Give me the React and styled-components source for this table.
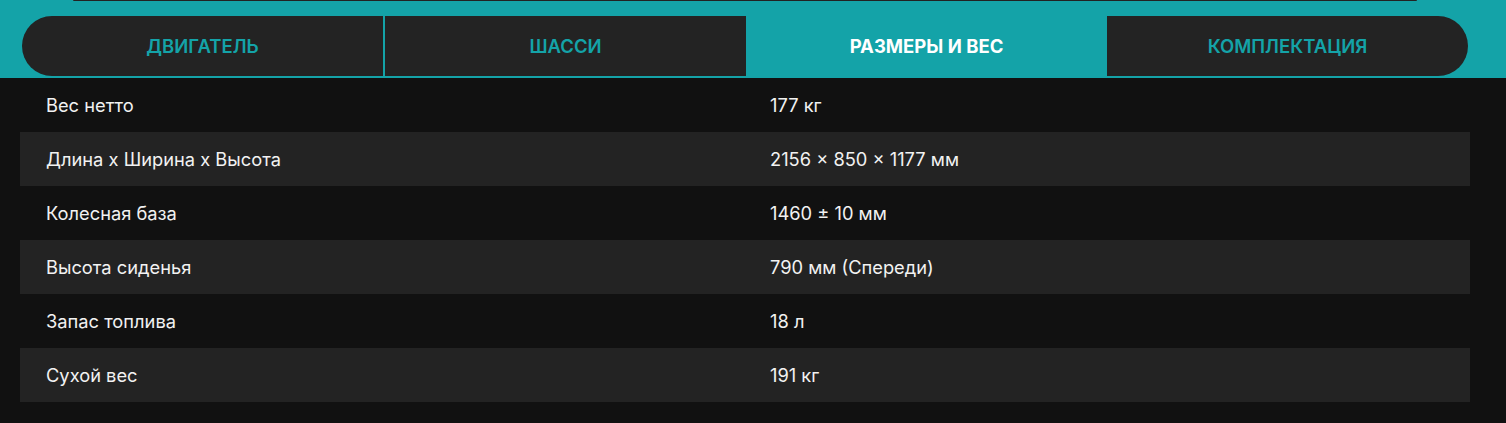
import React, { useState } from "react";
import styled, { createGlobalStyle } from "styled-components";

const GlobalStyle = createGlobalStyle`
  body {
    margin: 0;
    background: #111111;
    font-family: Inter, "Noto Sans", sans-serif;
  }
`;

const TEAL = "#14a3a8";

// components with styles
const Page = styled.div`
  width: 1506px;
  padding-bottom: 21px;
`;

const TabsBand = styled.div`
  background: ${TEAL};
  padding: 0 38px 2px 22px;
`;

const TopEdge = styled.div`
  height: 1px;
  margin: 0 51px 15px 51px;
  background: #222222;
  border-radius: 0 0 6px 6px;
`;

const TabRow = styled.div`
  display: flex;
  height: 60px;
  border-radius: 30px;
  overflow: hidden;
`;

const Tab = styled.button`
  flex: 1;
  box-sizing: border-box;
  border: none;
  margin: 0;
  padding: 0;
  cursor: pointer;
  font-family: Inter, "Noto Sans", sans-serif;
  font-size: 18.5px;
  text-transform: uppercase;
  background: ${(p) => (p.$active ? TEAL : "#232323")};
  color: ${(p) => (p.$active ? "#ffffff" : TEAL)};
  border-right: ${(p) => (p.$divider ? `2px solid ${TEAL}` : "none")};
  font-weight: ${(p) => (p.$active ? 700 : 600)};
`;

const Table = styled.div`
  margin: 0 36px 0 20px;
`;

const Row = styled.div`
  display: grid;
  grid-template-columns: 1fr 1fr;
  height: 54px;
  align-items: center;
  background: ${(p) => (p.$alt ? "#232323" : "transparent")};
  color: #f2f2f2;
  font-size: 18.3px;
`;

const Cell = styled.span`
  padding-left: ${(p) => (p.$value ? "25px" : "26px")};
`;

const tabs = ["Двигатель", "Шасси", "Размеры и вес", "Комплектация"];

const specs = [
  ["Вес нетто", "177 кг"],
  ["Длина x Ширина x Высота", "2156 × 850 × 1177 мм"],
  ["Колесная база", "1460 ± 10 мм"],
  ["Высота сиденья", "790 мм (Спереди)"],
  ["Запас топлива", "18 л"],
  ["Сухой вес", "191 кг"],
];

const App = () => {
  const [active, setActive] = useState(2);

  return (
    <Page>
      <GlobalStyle />
      <TabsBand>
        <TopEdge />
        <TabRow>
          {tabs.map((t, i) => (
            <Tab
              key={t}
              $active={i === active}
              $divider={i === 0}
              onClick={() => setActive(i)}
            >
              {t}
            </Tab>
          ))}
        </TabRow>
      </TabsBand>
      <Table>
        {specs.map(([label, value], i) => (
          <Row key={label} $alt={i % 2 === 1}>
            <Cell>{label}</Cell>
            <Cell $value>{value}</Cell>
          </Row>
        ))}
      </Table>
    </Page>
  );
};

export default App;
